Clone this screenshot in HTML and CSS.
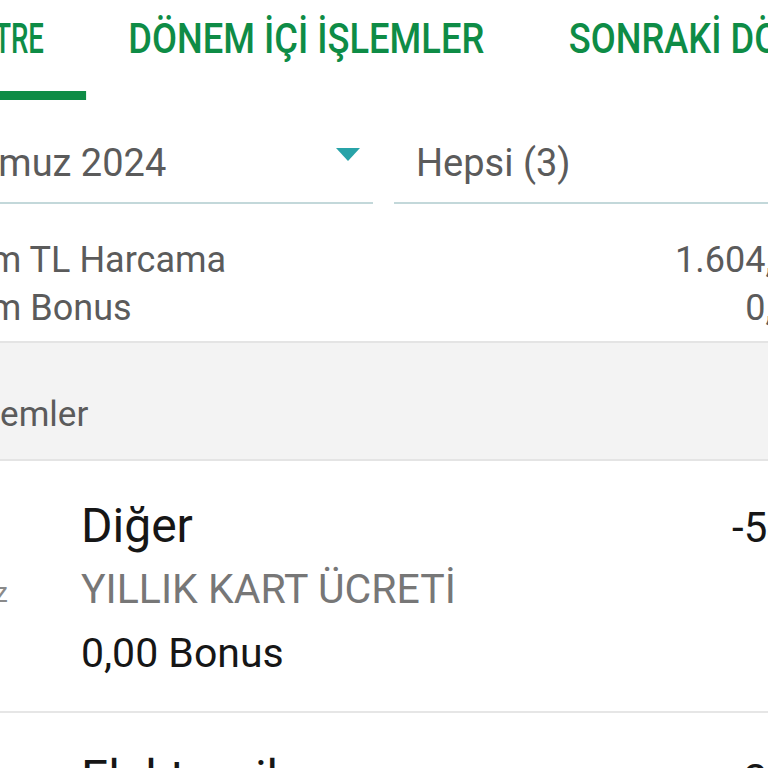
FILE: index.html
```html
<!DOCTYPE html>
<html lang="tr">
<head>
<meta charset="utf-8">
<title>Dönem İçi İşlemler</title>
<link rel="stylesheet" href="styles.css">
</head>
<body>
<div class="screen">
  <nav class="tabs">
    <div class="tab tab-active"><span class="tab-label">EKSTRE</span></div>
    <div class="tab"><span class="tab-label">DÖNEM İÇİ İŞLEMLER</span></div>
    <div class="tab"><span class="tab-label">SONRAKİ DÖNEM</span></div>
  </nav>

  <div class="filters">
    <div class="field field-month">
      <span>Temmuz 2024</span>
      <svg class="arrow" viewBox="0 0 24 13" width="24" height="13"><polygon points="0,0 24,0 12,13"/></svg>
    </div>
    <div class="field field-type"><span>Hepsi (3)</span></div>
  </div>

  <div class="summary">
    <div class="sum-row"><span>Toplam TL Harcama</span><span>1.604,78</span></div>
    <div class="sum-row"><span>Toplam Bonus</span><span>0,00</span></div>
  </div>

  <div class="section-head">İşlemler</div>

  <div class="item">
    <div class="item-date"><span>Tmz</span></div>
    <div class="item-body">
      <div class="item-head"><span class="item-title">Diğer</span><span class="item-amount">-549,00</span></div>
      <div class="item-desc">YILLIK KART ÜCRETİ</div>
      <div class="item-bonus">0,00 Bonus</div>
    </div>
  </div>

  <div class="item">
    <div class="item-date"><span>Tmz</span></div>
    <div class="item-body">
      <div class="item-head"><span class="item-title">Elektronik</span><span class="item-amount">299,00</span></div>
      <div class="item-desc">ONLINE ALIŞVERİŞ</div>
      <div class="item-bonus">0,00 Bonus</div>
    </div>
  </div>
</div>
</body>
</html>
```

FILE: styles.css
```css
html, body {
  margin: 0;
  padding: 0;
  background: #ffffff;
}

body {
  font-family: Roboto, "Noto Sans", sans-serif;
  width: 768px;
  height: 768px;
  overflow: hidden;
}

.screen {
  width: 768px;
  height: 768px;
  overflow: hidden;
}

/* Tabs */
.tabs {
  display: flex;
  height: 100px;
  transform: scaleX(0.844);
  transform-origin: 0 0;
}

.tab {
  flex: 0 0 auto;
  box-sizing: border-box;
  height: 100px;
  padding: 17px 50px 0;
  font-size: 43px;
  font-weight: 500;
  line-height: 1;
  color: #0e8c46;
  white-space: nowrap;
  display: flex;
  justify-content: center;
}

.tab-label {
  display: inline-block;
}

.tab-active {
  width: 102px;
  padding-left: 0;
  justify-content: flex-end;
  border-bottom: 9px solid #0e8c46;
}

.tab-active .tab-label {
  transform: scaleX(0.76);
  transform-origin: 100% 0;
}

/* Filters */
.filters {
  display: flex;
  gap: 21px;
  margin-left: -100px;
  margin-right: -60px;
}

.field {
  box-sizing: border-box;
  height: 104px;
  padding-top: 44px;
  border-bottom: 2px solid #c3d8da;
  display: flex;
  align-items: flex-start;
  font-size: 38px;
  line-height: 1;
  color: #5b5b5b;
  white-space: nowrap;
}

.field-month {
  width: 473px;
  flex-shrink: 0;
  padding-left: 24px;
  padding-right: 13px;
  justify-content: space-between;
}

.arrow {
  margin-top: 4px;
  fill: #28a3a8;
}

.field-type {
  flex: 1;
  padding-left: 22px;
}

/* Summary */
.summary {
  margin: 0 -65px 0 -121px;
  padding: 32px 20px 9px 22px;
}

.sum-row {
  display: flex;
  justify-content: space-between;
  font-size: 36px;
  line-height: 48px;
  color: #5b5b5b;
  white-space: nowrap;
}

/* Section header */
.section-head {
  margin-left: -56px;
  padding: 54px 0 27px 20px;
  background: #f3f3f3;
  border-top: 2px solid #e4e4e4;
  border-bottom: 2px solid #e4e4e4;
  font-size: 35px;
  line-height: 1;
  color: #5b5b5b;
}

/* Items */
.item {
  display: flex;
  margin-right: -102px;
  border-bottom: 2px solid #e6e6e6;
}

.item-date {
  box-sizing: border-box;
  width: 81px;
  flex-shrink: 0;
  display: flex;
  justify-content: flex-end;
  align-items: flex-start;
  padding: 118px 73px 0 0;
  font-size: 28px;
  line-height: 1;
  color: #8a8a8a;
  white-space: nowrap;
}

.item-body {
  flex: 1;
  padding: 37px 0 30px;
}

.item-head {
  display: flex;
  justify-content: space-between;
  align-items: baseline;
  line-height: 56px;
  color: #161616;
}

.item-title {
  font-size: 48px;
}

.item-amount {
  font-size: 42px;
}

.item-desc {
  margin-top: 5px;
  font-size: 41px;
  line-height: 56px;
  color: #777777;
  white-space: nowrap;
}

.item-bonus {
  margin-top: 8px;
  font-size: 41px;
  line-height: 56px;
  color: #161616;
}
```
